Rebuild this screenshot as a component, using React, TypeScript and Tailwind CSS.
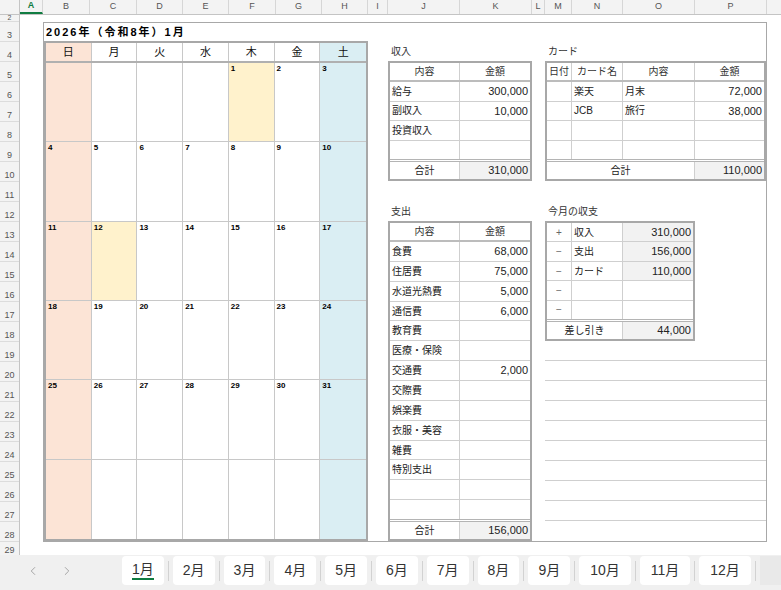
import { ChevronLeft, ChevronRight } from "lucide-react";

const colHeads = [
    { l: "A", w: "w-[23px]", sel: true },
    { l: "B", w: "w-[47px]" },
    { l: "C", w: "w-[47px]" },
    { l: "D", w: "w-[46px]" },
    { l: "E", w: "w-[46px]" },
    { l: "F", w: "w-[47px]" },
    { l: "G", w: "w-[46px]" },
    { l: "H", w: "w-[46px]" },
    { l: "I", w: "w-[20px]" },
    { l: "J", w: "w-[72px]" },
    { l: "K", w: "w-[72px]" },
    { l: "L", w: "w-[13px]" },
    { l: "M", w: "w-[27px]" },
    { l: "N", w: "w-[51px]" },
    { l: "O", w: "w-[72px]" },
    { l: "P", w: "w-[72px]" },
];

const rowNums = Array.from({ length: 26 }, (_, i) => i + 3);

const weeks: (number | null)[][] = [
    [null, null, null, null, 1, 2, 3],
    [4, 5, 6, 7, 8, 9, 10],
    [11, 12, 13, 14, 15, 16, 17],
    [18, 19, 20, 21, 22, 23, 24],
    [25, 26, 27, 28, 29, 30, 31],
    [null, null, null, null, null, null, null],
];
const holidays = [1, 12];
const dayNames = ["日", "月", "火", "水", "木", "金", "土"];

const income: [string, string][] = [
    ["給与", "300,000"],
    ["副収入", "10,000"],
    ["投資収入", ""],
    ["", ""],
];

const expense: [string, string][] = [
    ["食費", "68,000"],
    ["住居費", "75,000"],
    ["水道光熱費", "5,000"],
    ["通信費", "6,000"],
    ["教育費", ""],
    ["医療・保険", ""],
    ["交通費", "2,000"],
    ["交際費", ""],
    ["娯楽費", ""],
    ["衣服・美容", ""],
    ["雑費", ""],
    ["特別支出", ""],
    ["", ""],
    ["", ""],
];

const cards: [string, string, string][] = [
    ["楽天", "月末", "72,000"],
    ["JCB", "旅行", "38,000"],
    ["", "", ""],
    ["", "", ""],
];

const summary: [string, string, string][] = [
    ["+", "収入", "310,000"],
    ["−", "支出", "156,000"],
    ["−", "カード", "110,000"],
    ["−", "", ""],
    ["−", "", ""],
];

const tabs = ["1月", "2月", "3月", "4月", "5月", "6月", "7月", "8月", "9月", "10月", "11月", "12月"];

const Calendar = () => (
    <div className="flex h-[500px] w-[324px] flex-col border-2 border-[#a8a8a8]">
        <div className="grid h-[20px] grid-cols-7 border-b-2 border-[#b0b0b0]">
            {dayNames.map((d, i) => (
                <div
                    key={d}
                    className={`flex items-center justify-center text-[11px] text-[#111] ${i < 6 ? "border-r border-[#c8c8c8]" : ""} ${i === 0 ? "bg-[#fce4d6]" : i === 6 ? "bg-[#daeef3]" : "bg-white"}`}
                >
                    {d}
                </div>
            ))}
        </div>
        <div className="grid flex-1 grid-cols-7 grid-rows-6">
            {weeks.map((w, wi) =>
                w.map((d, i) => {
                    const bg =
                        i === 0
                            ? "bg-[#fce4d6]"
                            : i === 6
                              ? "bg-[#daeef3]"
                              : d && holidays.includes(d)
                                ? "bg-[#fff2cc]"
                                : "bg-white";
                    return (
                        <div
                            key={`${wi}-${i}`}
                            className={`${bg} ${i < 6 ? "border-r" : ""} ${wi < 5 ? "border-b" : ""} border-[#c8c8c8] pl-[2px] pt-[2px] text-[8px] leading-none font-bold text-black`}
                        >
                            {d ?? ""}
                        </div>
                    );
                })
            )}
        </div>
    </div>
);

const ListTable = ({ items, total, h }: { items: [string, string][]; total: string; h: string }) => (
    <div className={`flex ${h} flex-col border-2 border-[#a8a8a8] bg-white`}>
        <div className="grid h-[19px] shrink-0 grid-cols-[70px_1fr] border-b-2 border-[#bcbcbc] text-[10px] text-[#333]">
            <div className="flex items-center justify-center border-r border-[#cfcfcf]">内容</div>
            <div className="flex items-center justify-center">金額</div>
        </div>
        {items.map(([label, amt], i) => (
            <div key={i} className={`grid flex-1 grid-cols-[70px_1fr] ${i < items.length - 1 ? "border-b" : ""} border-[#cfcfcf]`}>
                <div className="flex items-center border-r border-[#cfcfcf] pl-[2px] text-[10px] text-[#222]">{label}</div>
                <div className="flex items-center justify-end pr-[2px] text-[11px] text-[#222]">{amt}</div>
            </div>
        ))}
        <div className="grid h-[20px] shrink-0 grid-cols-[70px_1fr] border-t-[3px] border-double border-[#b4b4b4]">
            <div className="flex items-center justify-center border-r border-[#cfcfcf] text-[10px] text-[#222]">合計</div>
            <div className="flex items-center justify-end bg-[#f2f2f2] pr-[2px] text-[11px] text-[#222]">{total}</div>
        </div>
    </div>
);

const CardTable = () => (
    <div className="flex h-[120px] flex-col border-2 border-[#a8a8a8] bg-white">
        <div className="grid h-[19px] shrink-0 grid-cols-[25px_51px_72px_1fr] border-b-2 border-[#bcbcbc] text-[10px] text-[#333]">
            <div className="flex items-center justify-center border-r border-[#cfcfcf]">日付</div>
            <div className="flex items-center justify-center border-r border-[#cfcfcf]">カード名</div>
            <div className="flex items-center justify-center border-r border-[#cfcfcf]">内容</div>
            <div className="flex items-center justify-center">金額</div>
        </div>
        {cards.map(([name, memo, amt], i) => (
            <div key={i} className={`grid flex-1 grid-cols-[25px_51px_72px_1fr] ${i < cards.length - 1 ? "border-b" : ""} border-[#cfcfcf]`}>
                <div className="border-r border-[#cfcfcf]" />
                <div className="flex items-center border-r border-[#cfcfcf] pl-[2px] text-[10px] text-[#222]">{name}</div>
                <div className="flex items-center border-r border-[#cfcfcf] pl-[2px] text-[10px] text-[#222]">{memo}</div>
                <div className="flex items-center justify-end pr-[2px] text-[11px] text-[#222]">{amt}</div>
            </div>
        ))}
        <div className="grid h-[20px] shrink-0 grid-cols-[25px_51px_72px_1fr] border-t-[3px] border-double border-[#b4b4b4]">
            <div className="col-span-3 flex items-center justify-center border-r border-[#cfcfcf] text-[10px] text-[#222]">合計</div>
            <div className="flex items-center justify-end bg-[#f2f2f2] pr-[2px] text-[11px] text-[#222]">110,000</div>
        </div>
    </div>
);

const SummaryTable = () => (
    <div className="flex h-[120px] w-[150px] flex-col border-2 border-[#a8a8a8] bg-white">
        {summary.map(([sign, label, amt], i) => (
            <div key={i} className={`grid flex-1 grid-cols-[25px_51px_1fr] ${i < summary.length - 1 ? "border-b" : ""} border-[#cfcfcf]`}>
                <div className="flex items-center justify-center border-r border-[#cfcfcf] text-[10px] text-[#666]">{sign}</div>
                <div className="flex items-center border-r border-[#cfcfcf] pl-[2px] text-[10px] text-[#222]">{label}</div>
                <div className={`flex items-center justify-end pr-[2px] text-[11px] text-[#222] ${amt ? "bg-[#f2f2f2]" : ""}`}>{amt}</div>
            </div>
        ))}
        <div className="grid h-[20px] shrink-0 grid-cols-[25px_51px_1fr] border-t-[3px] border-double border-[#b4b4b4]">
            <div className="col-span-2 flex items-center justify-center border-r border-[#cfcfcf] text-[10px] text-[#222]">差し引き</div>
            <div className="flex items-center justify-end bg-[#f2f2f2] pr-[2px] text-[11px] text-[#222]">44,000</div>
        </div>
    </div>
);

const Label = ({ children }: { children: string }) => (
    <div className="flex h-[20px] items-center pl-[3px] text-[10px] text-[#333]">{children}</div>
);

export default function App() {
    return (
        <div className="flex h-[590px] w-[781px] flex-col overflow-hidden bg-white font-['Liberation_Sans','Noto_Sans_CJK_JP',sans-serif]">
            {/* column headers */}
            <div className="flex h-[15px] shrink-0 border-b border-[#c4c4c4] bg-[#f3f3f3]">
                <div className="w-[20px] shrink-0 border-r border-[#c4c4c4]" />
                {colHeads.map((c) => (
                    <div
                        key={c.l}
                        className={`${c.w} flex shrink-0 items-center justify-center border-r border-[#d6d6d6] text-[9px] ${c.sel ? "border-b-2 border-b-[#107c41] font-bold text-[#107c41]" : "text-[#555]"}`}
                    >
                        {c.l}
                    </div>
                ))}
                <div className="flex-1" />
            </div>

            <div className="flex h-[540px] shrink-0">
                {/* row headers */}
                <div className="flex w-[20px] shrink-0 flex-col border-r border-[#c4c4c4] bg-[#f3f3f3] text-[9px] text-[#555]">
                    <div className="flex h-[7px] items-end justify-center border-b border-[#dcdcdc] text-[7px] leading-none">2</div>
                    {rowNums.map((n) => (
                        <div key={n} className="flex h-[20px] items-end justify-center border-b border-[#dcdcdc] pb-[1px] leading-none">
                            {n}
                        </div>
                    ))}
                    <div className="flex flex-1 items-end justify-center leading-none">29</div>
                </div>

                {/* sheet */}
                <div className="flex-1 pl-[23px] pt-[7px]">
                    <div className="flex w-[724px] flex-col border border-[#a8a8a8]">
                        <div className="flex h-[18px] items-center pl-[2px] text-[11px] font-bold tracking-[2px] text-black">
                            2026年（令和8年）1月
                        </div>
                        <div className="flex h-[500px]">
                            <Calendar />
                            <div className="w-[20px] shrink-0" />
                            <div className="flex w-[144px] shrink-0 flex-col">
                                <Label>収入</Label>
                                <ListTable items={income} total="310,000" h="h-[120px]" />
                                <div className="h-[20px]" />
                                <Label>支出</Label>
                                <ListTable items={expense} total="156,000" h="h-[320px]" />
                            </div>
                            <div className="w-[13px] shrink-0" />
                            <div className="flex flex-1 flex-col">
                                <Label>カード</Label>
                                <CardTable />
                                <div className="h-[20px]" />
                                <Label>今月の収支</Label>
                                <SummaryTable />
                                {Array.from({ length: 9 }, (_, i) => (
                                    <div key={i} className="h-[20px] border-b border-[#cfcfcf]" />
                                ))}
                                <div className="flex-1" />
                            </div>
                        </div>
                    </div>
                </div>
            </div>

            {/* sheet tabs */}
            <div className="flex h-[35px] shrink-0 items-start bg-[#f0f0f0] pt-[1px]">
                <div className="flex h-[29px] w-[122px] shrink-0 items-center gap-[20px] pl-[26px] text-[#9a9a9a]">
                    <ChevronLeft size={14} strokeWidth={1.5} />
                    <ChevronRight size={14} strokeWidth={1.5} />
                </div>
                {tabs.map((t, i) => (
                    <div key={t} className="flex items-center">
                        <div
                            className={`flex h-[29px] items-center rounded-[4px] bg-white ${t.length > 2 ? "px-[11px]" : "px-[10px]"} text-[14px] text-[#333]`}
                        >
                            <span className={i === 0 ? "border-b-2 border-[#107c41] leading-[17px]" : "leading-[17px]"}>{t}</span>
                        </div>
                        <div className="mx-[4px] h-[20px] w-px bg-[#d2d2d2]" />
                    </div>
                ))}
                <div className="h-[29px] flex-1 bg-[#e9e9e9]" />
            </div>
        </div>
    );
}
